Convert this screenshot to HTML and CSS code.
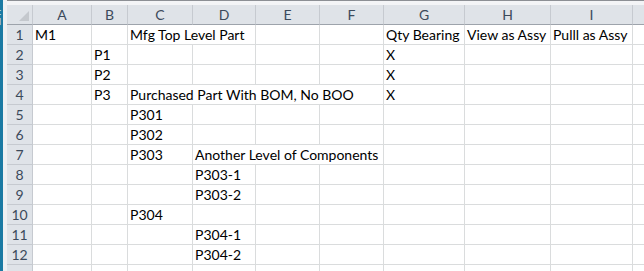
FILE: index.html
```html
<!DOCTYPE html>
<html>
<head>
<meta charset="utf-8">
<link rel="stylesheet" href="styles.css">
</head>
<body>
<div class="app">
  <div class="side-bar"><span class="side-glyph">:</span><span class="side-glyph">l</span></div>
  <div class="gutter"></div>
  <div class="sheet">
    <div class="top-strip"></div>
    <div class="grid">
      <div class="corner"><span class="corner-tri"></span></div>
      <div class="col-h">A</div>
      <div class="col-h">B</div>
      <div class="col-h">C</div>
      <div class="col-h">D</div>
      <div class="col-h">E</div>
      <div class="col-h">F</div>
      <div class="col-h">G</div>
      <div class="col-h">H</div>
      <div class="col-h">I</div>
      <div class="col-h col-j"></div>

      <div class="row-h">1</div>
      <div class="cell">M1</div>
      <div class="cell"></div>
      <div class="cell span2">Mfg Top Level Part</div>
      <div class="cell"></div>
      <div class="cell"></div>
      <div class="cell">Qty Bearing</div>
      <div class="cell">View as Assy</div>
      <div class="cell">Pulll as Assy</div>
      <div class="cell"></div>

      <div class="row-h">2</div>
      <div class="cell"></div>
      <div class="cell">P1</div>
      <div class="cell"></div>
      <div class="cell"></div>
      <div class="cell"></div>
      <div class="cell"></div>
      <div class="cell">X</div>
      <div class="cell"></div>
      <div class="cell"></div>
      <div class="cell"></div>

      <div class="row-h">3</div>
      <div class="cell"></div>
      <div class="cell">P2</div>
      <div class="cell"></div>
      <div class="cell"></div>
      <div class="cell"></div>
      <div class="cell"></div>
      <div class="cell">X</div>
      <div class="cell"></div>
      <div class="cell"></div>
      <div class="cell"></div>

      <div class="row-h">4</div>
      <div class="cell"></div>
      <div class="cell">P3</div>
      <div class="cell span4">Purchased Part With BOM, No BOO</div>
      <div class="cell">X</div>
      <div class="cell"></div>
      <div class="cell"></div>
      <div class="cell"></div>

      <div class="row-h">5</div>
      <div class="cell"></div>
      <div class="cell"></div>
      <div class="cell">P301</div>
      <div class="cell"></div>
      <div class="cell"></div>
      <div class="cell"></div>
      <div class="cell"></div>
      <div class="cell"></div>
      <div class="cell"></div>
      <div class="cell"></div>

      <div class="row-h">6</div>
      <div class="cell"></div>
      <div class="cell"></div>
      <div class="cell">P302</div>
      <div class="cell"></div>
      <div class="cell"></div>
      <div class="cell"></div>
      <div class="cell"></div>
      <div class="cell"></div>
      <div class="cell"></div>
      <div class="cell"></div>

      <div class="row-h">7</div>
      <div class="cell"></div>
      <div class="cell"></div>
      <div class="cell">P303</div>
      <div class="cell span3">Another Level of Components</div>
      <div class="cell"></div>
      <div class="cell"></div>
      <div class="cell"></div>
      <div class="cell"></div>

      <div class="row-h">8</div>
      <div class="cell"></div>
      <div class="cell"></div>
      <div class="cell"></div>
      <div class="cell">P303-1</div>
      <div class="cell"></div>
      <div class="cell"></div>
      <div class="cell"></div>
      <div class="cell"></div>
      <div class="cell"></div>
      <div class="cell"></div>

      <div class="row-h">9</div>
      <div class="cell"></div>
      <div class="cell"></div>
      <div class="cell"></div>
      <div class="cell">P303-2</div>
      <div class="cell"></div>
      <div class="cell"></div>
      <div class="cell"></div>
      <div class="cell"></div>
      <div class="cell"></div>
      <div class="cell"></div>

      <div class="row-h">10</div>
      <div class="cell"></div>
      <div class="cell"></div>
      <div class="cell">P304</div>
      <div class="cell"></div>
      <div class="cell"></div>
      <div class="cell"></div>
      <div class="cell"></div>
      <div class="cell"></div>
      <div class="cell"></div>
      <div class="cell"></div>

      <div class="row-h">11</div>
      <div class="cell"></div>
      <div class="cell"></div>
      <div class="cell"></div>
      <div class="cell">P304-1</div>
      <div class="cell"></div>
      <div class="cell"></div>
      <div class="cell"></div>
      <div class="cell"></div>
      <div class="cell"></div>
      <div class="cell"></div>

      <div class="row-h">12</div>
      <div class="cell"></div>
      <div class="cell"></div>
      <div class="cell"></div>
      <div class="cell">P304-2</div>
      <div class="cell"></div>
      <div class="cell"></div>
      <div class="cell"></div>
      <div class="cell"></div>
      <div class="cell"></div>
      <div class="cell"></div>

      <div class="row-h"></div>
      <div class="cell"></div>
      <div class="cell"></div>
      <div class="cell"></div>
      <div class="cell"></div>
      <div class="cell"></div>
      <div class="cell"></div>
      <div class="cell"></div>
      <div class="cell"></div>
      <div class="cell"></div>
      <div class="cell"></div>
    </div>
  </div>
</div>
</body>
</html>
```

FILE: styles.css
```css
html, body {
  margin: 0;
  padding: 0;
  background: #ffffff;
  overflow: hidden;
}

.app {
  display: flex;
  width: 644px;
  height: 271px;
  overflow: hidden;
}

.side-bar {
  width: 3px;
  flex: none;
  background: #1a7aa3;
  display: flex;
  flex-direction: column;
  padding-top: 8px;
  gap: 2px;
  overflow: hidden;
}

.side-glyph {
  color: #d8eef7;
  font: 9px "Liberation Sans", sans-serif;
  line-height: 8px;
  margin-left: -1px;
}

.gutter {
  width: 4px;
  flex: none;
  background: #eef0f2;
}

.sheet {
  flex: 1;
  display: flex;
  flex-direction: column;
  overflow: hidden;
}

.top-strip {
  flex: none;
  border-top: 1px solid #8c8f94;
  background: #f3f4f6;
  box-sizing: border-box;
  height: 5px;
}

.grid {
  display: grid;
  grid-template-columns: 26px 59px 36px 65px 63px 64px 64px 81px 86px 82px 100px;
  grid-auto-rows: 20px;
  font-family: "Lato", "Liberation Sans", sans-serif;
  font-size: 14px;
}

.corner,
.col-h,
.row-h {
  background: #dfe3e8;
  color: #3c4a5b;
  box-sizing: border-box;
  border-right: 1px solid #c6cad0;
  border-bottom: 1px solid #c6cad0;
}

.corner {
  position: relative;
  border-bottom-color: #9da3ab;
}

.corner-tri {
  position: absolute;
  right: 3px;
  bottom: 3px;
  width: 0;
  height: 0;
  border-left: 10px solid transparent;
  border-bottom: 10px solid #c4c8cd;
}

.col-h {
  display: flex;
  align-items: center;
  justify-content: center;
  border-bottom-color: #9da3ab;
}

.row-h {
  display: flex;
  align-items: flex-end;
  justify-content: center;
  padding-bottom: 1px;
}

.cell {
  box-sizing: border-box;
  border-right: 1px solid #dadcdd;
  border-bottom: 1px solid #dadcdd;
  padding: 0 3px 1px 2px;
  display: flex;
  align-items: flex-end;
  white-space: nowrap;
  color: #000000;
}

.span2 { grid-column: span 2; }
.span3 { grid-column: span 3; }
.span4 { grid-column: span 4; }
```
